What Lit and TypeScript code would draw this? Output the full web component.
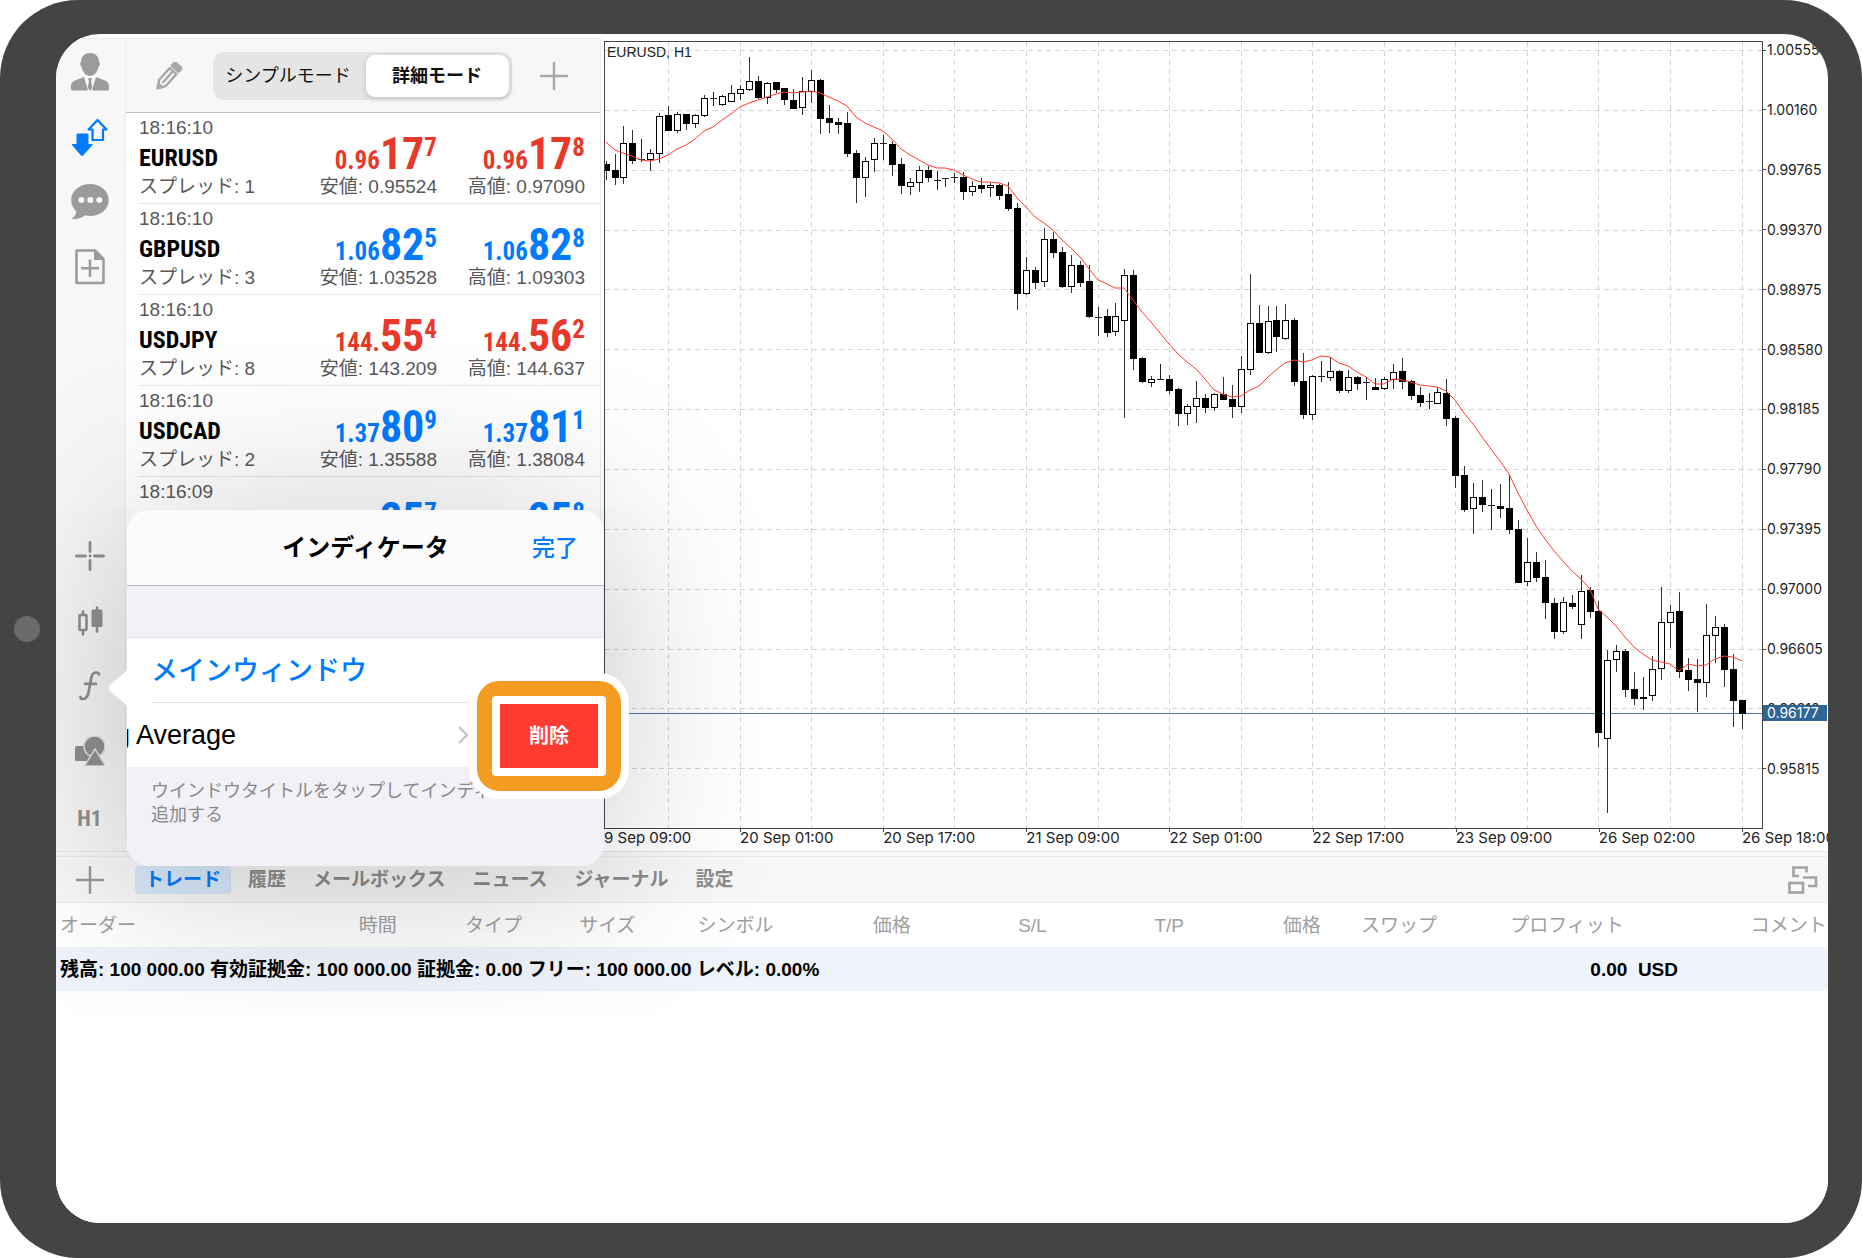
import { LitElement, html, svg, css } from "lit";
import { customElement, state } from "lit/decorators.js";
import { classMap } from "lit/directives/class-map.js";

type Quote = { time: string; symbol: string; spread: string; up: boolean; low: string; high: string; bid: string[]; ask: string[] };

const QUOTES: Quote[] = [
  { time: "18:16:10", symbol: "EURUSD", spread: "1", up: false, low: "0.95524", high: "0.97090", bid: ["0.96", "17", "7"], ask: ["0.96", "17", "8"] },
  { time: "18:16:10", symbol: "GBPUSD", spread: "3", up: true, low: "1.03528", high: "1.09303", bid: ["1.06", "82", "5"], ask: ["1.06", "82", "8"] },
  { time: "18:16:10", symbol: "USDJPY", spread: "8", up: false, low: "143.209", high: "144.637", bid: ["144.", "55", "4"], ask: ["144.", "56", "2"] },
  { time: "18:16:10", symbol: "USDCAD", spread: "2", up: true, low: "1.35588", high: "1.38084", bid: ["1.37", "80", "9"], ask: ["1.37", "81", "1"] },
  { time: "18:16:09", symbol: "", spread: "", up: true, low: "", high: "", bid: ["", "25", "7"], ask: ["", "25", "8"] },
];

// high, body top, body bottom, low, filled (1 = falling candle); y grows downwards
const CANDLES: number[][] = [
  [161,164,170,179,1],[154,170,177,184,1],[126,143,177,183,0],[130,143,160,163,1],[139,159,159,162,0],[149,153,159,170,0],
  [113,116,153,162,0],[106,115,130,130,1],[112,114,130,132,0],[114,114,123,129,1],[114,115,123,127,0],[95,98,115,116,0],
  [92,98,98,106,0],[95,96,104,105,0],[85,93,101,101,0],[85,89,93,99,0],[57,81,89,90,0],[76,81,97,98,1],
  [82,83,97,103,0],[82,82,89,92,1],[88,88,99,104,1],[89,100,108,108,1],[77,91,107,114,0],[70,80,91,102,0],
  [79,80,118,133,1],[105,118,122,132,1],[118,122,124,133,1],[112,123,153,156,1],[150,153,177,202,1],[157,161,177,196,0],
  [138,143,159,171,0],[135,143,143,160,0],[141,144,164,175,1],[158,164,185,193,1],[178,182,186,194,0],[166,170,182,191,0],
  [166,170,177,181,1],[171,180,180,190,0],[178,178,178,187,0],[173,177,177,183,0],[172,177,191,199,1],[181,186,191,195,0],
  [178,185,188,192,1],[183,185,187,196,0],[184,185,195,199,1],[182,194,208,210,1],[203,208,293,309,1],[257,270,293,294,0],
  [267,270,282,288,1],[228,239,281,286,0],[232,239,252,257,1],[247,252,286,287,1],[255,265,286,292,0],[261,265,282,286,1],
  [265,281,316,317,1],[307,317,317,336,0],[309,316,332,336,1],[303,316,331,335,0],[269,275,320,417,0],[270,275,358,369,1],
  [357,358,381,382,1],[376,379,382,386,0],[364,379,379,380,0],[375,379,390,393,1],[388,389,413,425,1],[404,406,413,424,0],
  [381,398,406,422,0],[394,398,407,412,1],[393,394,407,410,0],[377,394,399,399,1],[385,399,406,417,1],[356,369,406,412,0],
  [274,323,369,374,0],[305,323,352,352,1],[306,321,352,353,0],[306,320,336,351,1],[304,320,338,339,0],[318,320,381,385,1],
  [353,381,414,418,1],[375,376,414,419,0],[361,376,376,382,0],[357,371,377,380,0],[370,371,390,392,1],[370,377,390,392,0],
  [376,377,383,389,1],[377,382,382,400,0],[378,387,389,389,1],[377,379,388,389,0],[364,372,379,388,0],[358,371,381,388,1],
  [380,381,395,399,1],[387,395,402,406,1],[393,401,401,409,0],[387,392,403,403,0],[379,393,418,425,1],[416,418,475,487,1],
  [466,475,509,511,1],[483,497,508,533,0],[480,497,504,511,1],[489,505,505,530,0],[484,506,508,517,1],[475,508,529,533,1],
  [520,529,582,582,1],[538,562,581,585,0],[552,562,577,581,1],[560,577,602,618,1],[598,603,631,638,1],[597,602,631,633,0],
  [595,603,606,608,1],[575,591,624,638,0],[587,590,611,617,1],[601,611,732,746,1],[650,660,738,812,0],[645,651,659,671,0],
  [649,651,689,696,1],[672,689,698,704,1],[677,697,698,709,0],[656,669,695,700,0],[587,622,668,679,0],[605,612,622,647,0],
  [592,611,671,677,1],[658,670,679,690,1],[659,679,682,711,1],[604,635,682,696,0],[616,627,635,662,0],[624,627,669,686,1],
  [654,669,700,726,1],[700,700,713,728,1],
];

const AVERAGE = [
  142,150,153,156,160,161,159,155,149,145,139,131,127,120,114,107,103,100,97,94,92,93,92,91,93,97,101,106,117,123,127,131,
  139,149,155,160,165,168,168,170,175,179,182,182,183,186,198,207,217,223,230,240,248,257,269,280,284,288,288,300,312,322,
  333,344,354,362,369,379,390,394,397,396,390,386,377,370,363,360,362,360,356,357,363,366,372,377,384,384,379,380,382,385,
  386,387,391,400,413,424,437,449,461,474,493,510,526,539,551,561,571,579,589,609,617,626,637,647,654,660,662,664,671,664,
  666,665,659,656,657,661,
];

const PRICES = ["1.00555","1.00160","0.99765","0.99370","0.98975","0.98580","0.98185","0.97790","0.97395","0.97000","0.96605","0.96210","0.95815"];
const TIMES = ["9 Sep 09:00","20 Sep 01:00","20 Sep 17:00","21 Sep 09:00","22 Sep 01:00","22 Sep 17:00","23 Sep 09:00","26 Sep 02:00","26 Sep 18:00"];
const TABS = ["トレード","履歴","メールボックス","ニュース","ジャーナル","設定"];
const COLUMNS: [string, number][] = [
  ["オーダー",298],["時間",106],["タイプ",114],["サイズ",118],["シンボル",175],["価格",145],["S/L",136],["T/P",128],["価格",78],["スワップ",149],["プロフィット",240],["コメント",81],
];

const xAt = (i: number) => Math.round(1741.6 - 8.945 * (CANDLES.length - 1 - i));

@customElement("price-chart")
class PriceChart extends LitElement {
  static styles = css`
    :host { display: grid; grid-template-columns: minmax(0, 1fr) 65px; grid-template-rows: minmax(0, 1fr) 22px; min-width: 0; color: #222;
      font: 14px/18px Inter, "Liberation Sans", sans-serif; }
    .plot { position: relative; border: 1px solid #444; min-height: 0; }
    .plot svg { display: block; width: 100%; height: 100%; }
    .title { position: absolute; left: 2px; top: 1px; font: 14px/18px "Liberation Sans", sans-serif; }
    .prices { position: relative; display: flex; flex-direction: column; justify-content: space-between; padding-bottom: 51px; }
    .price { display: flex; align-items: center; }
    .price::before { content: ""; width: 3px; height: 1px; margin-right: 1px; background: #444; }
    .now { position: absolute; left: 0; right: 1px; top: 664px; height: 16px; line-height: 16px; padding-left: 4px; background: #2f6499; color: #fff; }
    .times { grid-column: 1 / -1; display: grid; grid-template-columns: 136fr repeat(7, 143fr) 86fr; white-space: nowrap; font-size: 15px; }
    .time { position: relative; min-width: 0; }
    .time + .time::before { content: ""; position: absolute; left: 0; top: 0; width: 1px; height: 3px; background: #444; }
  `;
  render() {
    const rows = PRICES.map((_, n) => Math.round(50 + 59.85 * n));
    const cols = Array.from({ length: 16 }, (_, n) => xAt(CANDLES.length - 1 - 8 * n));
    return html`
      <div class="plot">
        <svg viewBox="605 42 1157 786" preserveAspectRatio="none" aria-hidden="true">
          <g stroke="#d4d4d4" stroke-dasharray="5 4">
            ${rows.map((y) => svg`<path d="M605 ${y + 0.5}H1763"/>`)}
            ${cols.map((x) => svg`<path d="M${x + 0.5} 42V828"/>`)}
          </g>
          <path d="M605 713.5H1763" stroke="#4a78b0"/>
          ${CANDLES.map(([h, t, b, l, f], i) => {
            const x = xAt(i);
            if (t === b) return svg`<path d="M${x + 0.5} ${h}V${l}M${x - 3} ${t + 0.5}H${x + 4}" stroke="#222"/>`;
            return svg`<path d="M${x + 0.5} ${h}V${l + 1}" stroke="#333"/>
              <rect x=${x - 2.5} y=${t + 0.5} width="6" height=${b - t} fill=${f ? "#000" : "#fff"} stroke="#000"/>`;
          })}
          <polyline fill="none" stroke="#ff3b30" points=${AVERAGE.map((y, i) => `${xAt(i)},${y}`).join(" ")}/>
        </svg>
        <div class="title">EURUSD, H1</div>
      </div>
      <div class="prices">
        ${PRICES.map((p) => html`<div class="price">${p}</div>`)}
        <div class="now">0.96177</div>
      </div>
      <div class="times">${TIMES.map((t) => html`<div class="time">${t}</div>`)}</div>
    `;
  }
}

const icon = (w: number, h: number, body: unknown) => html`<svg width=${w} height=${h} viewBox="0 0 ${w} ${h}" aria-hidden="true">${body}</svg>`;

const PLUS = icon(28, 28, svg`<path d="M14 0V28M0 14H28" stroke="currentColor" stroke-width="2.5"/>`);
const PERSON = icon(38, 38, svg`<g fill="currentColor"><path d="M19 0C25 0 28 4 28 9c1 0 1 4-.5 5C26.500 19 23 23 19 23S11.500 19 10.500 14C9 13 9 9 10 9C10 4 13 0 19 0z"/><path d="M13 24l4 13.500H1.500Q0 37.500 0 36V33Q0 29 4 27.500zM25 24l-4 13.500h15.500q1.500 0 1.500-1.500v-3q0-4-4-5.500z"/><path d="M17 25h4l-1 3.500 1.300 6L19 38l-2.300-3.500 1.300-6z"/></g>`);
const ARROWS = icon(38, 38, svg`<path d="M7 15.500h9.500q1 0 1 1V26h3.500q1 .3.500 1L12 37.500q-1 .8-2 0L1 27q-.5-.7.5-1H5.500V16.500q0-1 1.500-1z" fill="currentColor"/><path d="M26.500 2L35.500 11.500H32V22H21.500V11.500H17.500z" fill="none" stroke="currentColor" stroke-width="2.200" stroke-linejoin="round"/>`);
const CHAT = icon(38, 36, svg`<path d="M19 0C29.500 0 37.800 7 37.800 16S29.500 32 19 32q-2.500 0-5-.7Q9 35.500.5 35Q5 31.500 5.500 27.500Q.2 23 .2 16C.2 7 8.500 0 19 0z" fill="currentColor"/><g fill="#f7f7f7"><circle cx="10.300" cy="16" r="3"/><circle cx="19.300" cy="16" r="3"/><circle cx="28.300" cy="16" r="3"/></g>`);
const DOC = icon(30, 36, svg`<path d="M2 1.500H20L28.500 10V34H1.500V2z" fill="none" stroke="currentColor" stroke-width="2.600" stroke-linejoin="round"/><path d="M19 1L29 11H19z" fill="currentColor"/><path d="M15 10.500V28M6 19.300H24" stroke="currentColor" stroke-width="2.600"/>`);
const CROSS = icon(30, 30, svg`<path d="M15 1.500V10.500M15 19.500V28.500M1.500 15H10.500M19.500 15H28.500M15 15h.1" stroke="currentColor" stroke-width="2.800" stroke-linecap="round"/>`);
const BARS = icon(26, 30, svg`<rect x="2.500" y="9" width="7" height="15" rx="1" fill="none" stroke="currentColor" stroke-width="2.600"/><path d="M6 5.500V8.500M6 25V28.500M20 1.500V25.500" stroke="currentColor" stroke-width="2.600" stroke-linecap="round"/><rect x="14.500" y="3.500" width="11" height="17.500" rx="1.500" fill="currentColor"/>`);
const FUNC = icon(22, 30, svg`<path d="M20 3.500Q19.500 1.500 17 1.500Q13.300 1.500 12.300 7L9.500 21.500Q8.300 27.500 4 28Q1.500 28 1.500 26M6 12.800H17" fill="none" stroke="currentColor" stroke-width="2.700" stroke-linecap="round"/>`);
const SHAPES = icon(30, 30, svg`<rect x="0" y="10" width="16" height="15" rx="1.500" fill="currentColor"/><circle cx="19.500" cy="10.500" r="10.500" fill="currentColor" stroke="#e0e0e0" stroke-width="1.500"/><path d="M20 13L30.500 30H9.500z" fill="currentColor" stroke="#e0e0e0" stroke-width="1.500"/>`);
const PENCIL = icon(28, 28, svg`<g transform="translate(1 27) rotate(-48)" fill="none" stroke="currentColor" stroke-width="2.400" stroke-linejoin="round"><path d="M1 0L8 -4.500H24V4.500H8z"/><path d="M8 0H24"/><path d="M27 -4.500H30.500Q32 -4.500 32 -3V3Q32 4.500 30.500 4.500H27z" fill="currentColor"/><path d="M1 0L5 -2.500V2.500z" fill="currentColor"/></g>`);
const LAYOUT = icon(30, 28, svg`<g fill="none" stroke="currentColor" stroke-width="2.700"><path d="M11 10H5.500V1.500H18.500V6.500"/><path d="M15 11.500H28V20H20"/><rect x="1.500" y="17" width="13.500" height="9.500"/></g>`);
const CHEVRON = icon(10, 18, svg`<path d="M1 1L9 9L1 17" fill="none" stroke="currentColor" stroke-width="2.400"/>`);
const POINTER = html`<svg class="pointer" width="20" height="48" viewBox="0 0 20 48" aria-hidden="true"><path d="M20 0Q20 6 15 10L3 20Q-1.500 24 3 28L15 38Q20 42 20 48z" fill="#fff"/></svg>`;

@customElement("app-root")
class AppRoot extends LitElement {
  @state() private tab = "トレード";
  @state() private mode = "詳細モード";

  static styles = css`
    :host { display: block; height: 100vh; background: #fff; color: #000;
      font: 19px/30px "Liberation Sans", "Noto Sans CJK JP", sans-serif; }
    * { box-sizing: border-box; }
    button { margin: 0; padding: 0; border: 0; background: none; font: inherit; color: inherit; display: flex; align-items: center; justify-content: center; cursor: pointer; }
    svg { display: block; flex: none; }
    .device { position: relative; height: 100%; padding: 34px 34px 35px 56px; background: #444; border-radius: 78px; }
    .home { position: absolute; left: 14px; top: 50%; width: 26px; height: 26px; margin-top: -13px; border-radius: 50%; background: #6a6a6a; }
    .screen { position: relative; height: 100%; overflow: hidden; border-radius: 44px; background: #fff; display: grid; grid-template-rows: minmax(0, 818fr) minmax(0, 371fr); }
    .work { display: flex; min-width: 0; border-bottom: 1px solid #e4e4e4; padding-top: 4px; }
    .side { flex: 0 0 70px; display: flex; flex-direction: column; justify-content: space-between; background: #f7f7f7; border-right: 1px solid #ececec; border-top: 1px solid #eee; color: #9b9b9a; padding-right: 2px; }
    .group { display: flex; flex-direction: column; }
    .group.top { height: 260px; }
    .group.low { height: 327px; color: #90908e; }
    .tool { flex: 1; }
    .tool.on { color: #007aff; }
    .tool.frame { padding-top: 3px; font: 700 22px/24px "Roboto Condensed", sans-serif; }
    .watch { flex: 0 0 475px; display: flex; flex-direction: column; overflow: hidden; border-right: 1px solid #ececec; border-top: 1px solid #eee; }
    .bar { flex: 0 0 74px; display: flex; align-items: center; padding: 0 32px 0 30px; background: #f7f7f7; border-bottom: 1px solid #c2c2c4; color: #a9a9a9; justify-content: space-between; }
    .modes { display: flex; width: 299px; height: 48px; padding: 3px; border-radius: 11px; background: #e5e5e5; color: #111; font-size: 18px; }
    .mode { flex: 0 0 143px; border-radius: 9px; }
    .mode.plain { flex: 1; padding-right: 5px; }
    .mode.on { font-weight: 700; background: #fff; box-shadow: 0 2px 6px rgba(0, 0, 0, 0.15); }
    .list { list-style: none; margin: 0; padding: 0 0 0 13px; }
    .quote { display: grid; grid-template-columns: minmax(0, 1fr) 148px 148px; grid-template-rows: 31px 29px 30px; padding-right: 15px; border-bottom: 1px solid #e9e9e9; color: #58585a; white-space: nowrap; }
    .quote .clock, .quote .symbol, .quote .spread { grid-column: 1; }
    .quote .symbol { grid-row: 2; color: #000; font: 700 24px/29px "Roboto Condensed", sans-serif; }
    .quote .spread, .quote .range { grid-row: 3; line-height: 28px; }
    .quote .range { text-align: right; }
    .rate { grid-row: 1 / 3; display: flex; justify-content: flex-end; align-items: baseline; align-self: end; color: #e8382a; font: 700 25px/24px "Roboto Condensed", sans-serif; }
    .rate.bid { grid-column: 2; }
    .rate.ask { grid-column: 3; }
    .rate.up { color: #007aff; }
    .rate .big { font-size: 44px; line-height: 36px; }
    .rate .pip { align-self: flex-start; }
    price-chart { flex: 1; padding: 3px 0 0 3px; }
    .lower { display: flex; flex-direction: column; padding-top: 4px; background: #f7f7f7; }
    .tabs { flex: none; display: flex; align-items: center; height: 47px; padding: 0 10px 0 20px; border-top: 1px solid #ebebeb; border-bottom: 1px solid #ebebeb; background: #f7f7f7; color: #8c8c8c; gap: 7px; }
    .tabs .add { color: #999; margin-right: 24px; }
    .tabs .arrange { margin-left: auto; color: #a5a5a5; }
    .tab { height: 28px; padding: 0 10px; border-radius: 4px; font-weight: 700; }
    .tab.on { color: #007aff; background: #d9e9fb; }
    .ledger { flex: 1; background: #fff; overflow: hidden; }
    table { width: 100%; table-layout: fixed; border-collapse: collapse; white-space: nowrap; }
    th, td { padding: 2px 0 0 4px; height: 44px; text-align: left; font-weight: 400; color: #a0a0a0; }
    td { background: #eef3fc; color: #000; font-weight: 700; }
    td.profit { text-align: right; padding-right: 150px; white-space: pre; }
    .pop { position: absolute; left: 71px; top: 476px; width: 477px; height: 356px; border-radius: 22px; box-shadow: 0 10px 180px rgba(0, 0, 0, 0.24); }
    .pointer { position: absolute; left: -19px; top: 154px; }
    .sheet { height: 100%; overflow: hidden; border-radius: 22px; background: #f2f1f7; display: flex; flex-direction: column; }
    .head { flex: 0 0 76px; display: grid; grid-template-columns: 1fr auto 1fr; align-items: center; padding: 0 26px; background: #fbfbfc; border-bottom: 1px solid #b9b9bd; }
    .head h2 { grid-column: 2; margin: 0; font-size: 24px; font-weight: 700; }
    .done { justify-self: end; color: #007aff; font-size: 23px; font-weight: 500; }
    .rows { margin-top: 51px; background: #fff; border-top: 1px solid #e6e6ea; }
    .window { width: 100%; height: 64px; padding: 2px 0 0 24px; justify-content: flex-start; color: #007aff; font-size: 27px; font-weight: 500; }
    .swipe { height: 64px; display: flex; align-items: center; overflow: hidden; }
    .swipe .item { flex: 0 0 100%; height: 100%; display: flex; align-items: center; justify-content: space-between; margin-left: -108px; padding: 0 28px 0 24px; font-size: 27px; color: #000; text-decoration: none; }
    .item svg { color: #c4c4c7; }
    .line { height: 1px; margin: 0 24px; background: #e4e4e6; }
    .note { margin: 12px 12px 0 24px; color: #88888c; font-size: 18px; line-height: 24px; }
    .mark { position: absolute; left: 350px; top: 171px; padding: 8px; border: 15px solid #f49b22; border-radius: 22px; background: #fff; box-shadow: 0 0 0 8px #fff; }
    .mark::before { content: ""; position: absolute; inset: 0; border-radius: 4px; background: #fff; }
    .delete { position: relative; width: 98px; height: 64px; background: #ff3b30; color: #fff; font-size: 20px; font-weight: 700; }
  `;

  private rate(parts: string[], up: boolean, kind: string) {
    return html`<div class=${classMap({ rate: true, up, [kind]: true })}><span>${parts[0]}</span><span class="big">${parts[1]}</span><span class="pip">${parts[2]}</span></div>`;
  }

  render() {
    const total = COLUMNS.reduce((sum, c) => sum + c[1], 0);
    return html`
      <div class="device">
        <div class="home"></div>
        <div class="screen">
          <div class="work">
            <nav class="side">
              <div class="group top">
                <button class="tool" aria-label="アカウント">${PERSON}</button>
                <button class="tool on" aria-label="気配値">${ARROWS}</button>
                <button class="tool" aria-label="メッセージ">${CHAT}</button>
                <button class="tool" aria-label="新規注文">${DOC}</button>
              </div>
              <div class="group low">
                <button class="tool" aria-label="十字カーソル">${CROSS}</button>
                <button class="tool" aria-label="チャートの種類">${BARS}</button>
                <button class="tool" aria-label="インディケータ">${FUNC}</button>
                <button class="tool" aria-label="オブジェクト">${SHAPES}</button>
                <button class="tool frame">H1</button>
              </div>
            </nav>
            <section class="watch">
              <div class="bar">
                <button aria-label="編集">${PENCIL}</button>
                <div class="modes">
                  ${["シンプルモード", "詳細モード"].map((m, i) => html`<button class=${classMap({ mode: true, plain: i === 0, on: m === this.mode })} @click=${() => (this.mode = m)}>${m}</button>`)}
                </div>
                <button aria-label="銘柄を追加">${PLUS}</button>
              </div>
              <ul class="list">
                ${QUOTES.map((q) => html`
                  <li class="quote">
                    <span class="clock">${q.time}</span>
                    <span class="symbol">${q.symbol}</span>
                    ${this.rate(q.bid, q.up, "bid")}
                    ${this.rate(q.ask, q.up, "ask")}
                    ${q.symbol ? html`<span class="spread">スプレッド: ${q.spread}</span><span class="range">安値: ${q.low}</span><span class="range">高値: ${q.high}</span>` : null}
                  </li>`)}
              </ul>
            </section>
            <price-chart></price-chart>
          </div>
          <section class="lower">
            <div class="tabs">
              <button class="add" aria-label="追加">${PLUS}</button>
              ${TABS.map((t) => html`<button class=${classMap({ tab: true, on: t === this.tab })} @click=${() => (this.tab = t)}>${t}</button>`)}
              <button class="arrange" aria-label="レイアウト">${LAYOUT}</button>
            </div>
            <div class="ledger">
              <table>
                <thead><tr>${COLUMNS.map(([name, w]) => html`<th style="width:${(w / total) * 100}%">${name}</th>`)}</tr></thead>
                <tbody><tr>
                  <td colspan="9">残高: 100 000.00 有効証拠金: 100 000.00 証拠金: 0.00 フリー: 100 000.00 レベル: 0.00%</td>
                  <td class="profit" colspan="3">0.00  USD</td>
                </tr></tbody>
              </table>
            </div>
          </section>
          <div class="pop">
            ${POINTER}
            <div class="sheet">
              <div class="head"><h2>インディケータ</h2><button class="done">完了</button></div>
              <div class="rows">
                <button class="window">メインウィンドウ</button>
                <div class="line"></div>
                <div class="swipe"><a class="item" href="#">Moving Average${CHEVRON}</a></div>
              </div>
              <p class="note">ウインドウタイトルをタップしてインディケータを<br>追加する</p>
            </div>
            <div class="mark"><button class="delete">削除</button></div>
          </div>
        </div>
      </div>
    `;
  }
}
